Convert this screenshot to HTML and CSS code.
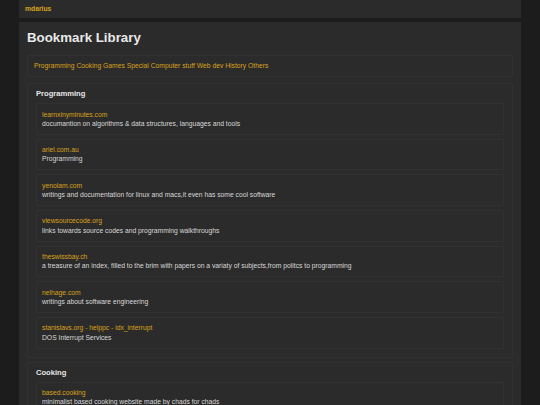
FILE: index.html
```html
<!DOCTYPE html>
<html lang="en">
<head>
<meta charset="utf-8">
<title>Bookmark Library</title>
<link rel="stylesheet" href="styles.css">
</head>
<body>
<div class="wrap">
  <header class="topbar"><a class="brand" href="#">mdarius</a></header>
  <main class="main">
    <h1 class="title">Bookmark Library</h1>
    <nav class="nav">
      <a href="#">Programming</a> <a href="#">Cooking</a> <a href="#">Games</a> <a href="#">Special Computer stuff</a> <a href="#">Web dev</a> <a href="#">History</a> <a href="#">Others</a>
    </nav>
    <section class="section">
      <h2 class="section-title">Programming</h2>
      <div class="item"><a href="#">learnxinyminutes.com</a><p>documantion on algorithms &amp; data structures, languages and tools</p></div>
      <div class="item"><a href="#">ariel.com.au</a><p>Programming</p></div>
      <div class="item"><a href="#">yenolam.com</a><p>writings and documentation for linux and macs,it even has some cool software</p></div>
      <div class="item"><a href="#">viewsourcecode.org</a><p>links towards source codes and programming walkthroughs</p></div>
      <div class="item"><a href="#">theswissbay.ch</a><p>a treasure of an index, filled to the brim with papers on a variaty of subjects,from politcs to programming</p></div>
      <div class="item"><a href="#">nelhage.com</a><p>writings about software engineering</p></div>
      <div class="item"><a href="#">stanislavs.org - helppc - idx_interrupt</a><p>DOS Interrupt Services</p></div>
    </section>
    <section class="section">
      <h2 class="section-title">Cooking</h2>
      <div class="item"><a href="#">based.cooking</a><p>minimalist based cooking website made by chads for chads</p></div>
    </section>
  </main>
</div>
</body>
</html>
```
FILE: styles.css
```css
html, body {
  margin: 0;
  padding: 0;
  background: #1c1c1c;
}
body {
  font-family: "Liberation Sans", Arial, sans-serif;
  font-size: 6.75px;
  color: #d8d8d8;
}
a {
  color: #d9a21b;
  text-decoration: none;
}
.wrap {
  width: 502px;
  margin: 0 auto;
}
.topbar {
  height: 18px;
  background: #2b2b2b;
  padding-left: 6px;
  line-height: 17px;
}
.brand {
  font-weight: bold;
  font-size: 6.75px;
}
.main {
  margin-top: 4px;
  background: #2b2b2b;
  padding: 8px 8px 10px;
  min-height: 400px;
}
.title {
  margin: 0 0 9px;
  font-size: 13.3px;
  line-height: 16px;
  font-weight: bold;
  color: #e8e8e8;
}
.nav {
  border: 1px solid #313131;
  padding: 6px 6px;
  line-height: 8px;
}
.section {
  margin-top: 6px;
  border: 1px solid #313131;
  padding: 5px 8px 8px;
}
.section + .section {
  margin-top: 4px;
}
.section-title {
  margin: 0 0 5px;
  font-size: 7.6px;
  line-height: 9px;
  font-weight: bold;
  color: #e6e6e6;
}
.item {
  border: 1px solid #313131;
  padding: 5.5px 5px;
  line-height: 9.33px;
}
.item + .item {
  margin-top: 4px;
}
.item a {
  display: block;
}
.item p {
  margin: 0;
}
```
